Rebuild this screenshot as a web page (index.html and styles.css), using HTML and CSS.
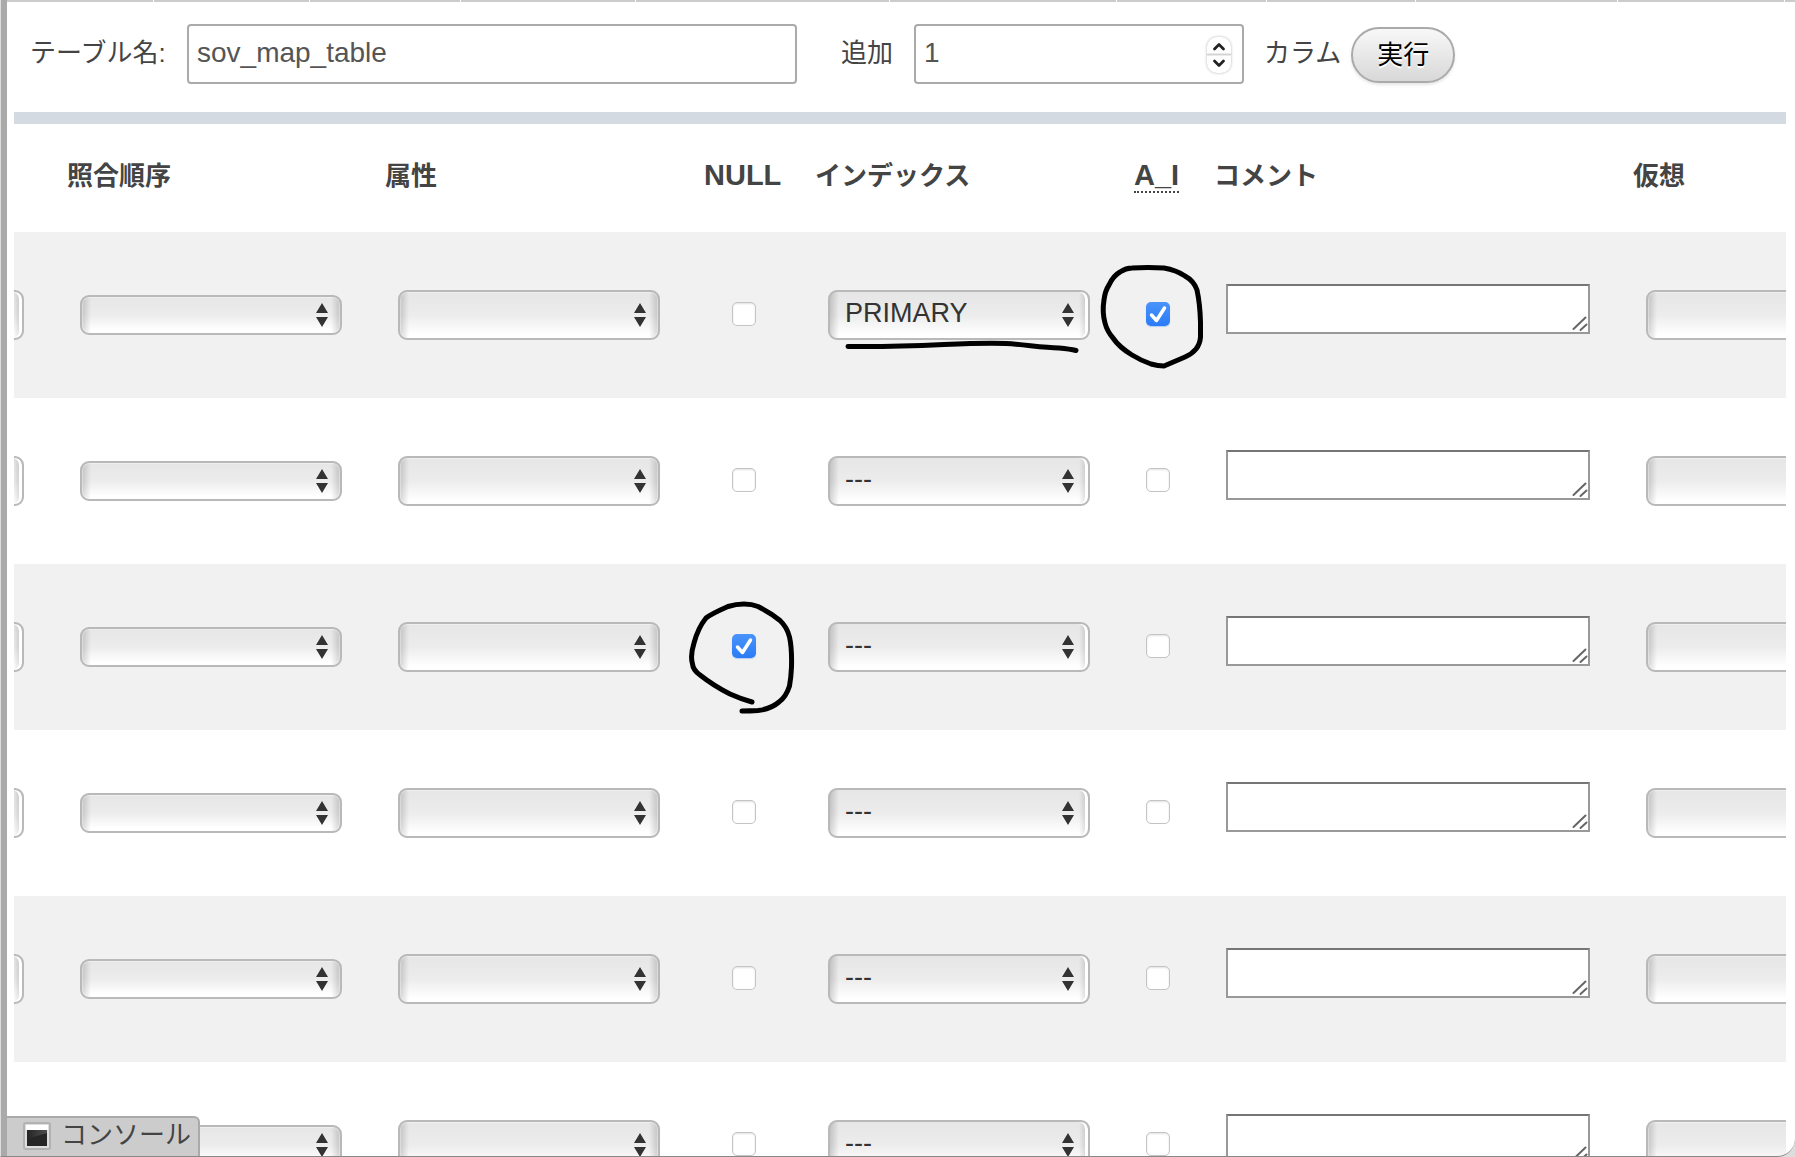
FILE: index.html
```html
<!DOCTYPE html>
<html lang="ja">
<head>
<meta charset="utf-8">
<title>sov_map_table</title>
<link rel="stylesheet" href="styles.css">
</head>
<body>
<main class="page">
  <div class="tab-edge"><i></i><i></i><i></i><i></i><i></i><i></i><i></i><i></i><i></i><i></i></div>
  <form class="toolbar">
    <label class="name-label" for="table-name">テーブル名:</label>
    <input class="field name-field" id="table-name" type="text" value="sov_map_table">
    <label class="add-label" for="add-count">追加</label>
    <div class="number">
      <input class="field" id="add-count" type="number" value="1">
      <svg class="spinner" viewBox="0 0 24 36" aria-hidden="true"><path d="M0 17.500h24" stroke="#d4d4d4" stroke-width="2"/><path d="M7.500 12 12 7.500l4.500 4.500M7.500 24l4.500 4.500 4.500-4.500" fill="none" stroke="#222" stroke-width="2.800" stroke-linecap="round" stroke-linejoin="round"/></svg>
    </div>
    <span class="unit">カラム</span>
    <button class="go" type="button">実行</button>
  </form>

  <div class="table-wrap">
  <table class="columns">
    <colgroup><col class="c-type"><col class="c-wide"><col class="c-wide"><col class="c-null"><col class="c-wide"><col class="c-ai"><col class="c-comment"><col></colgroup>
    <thead>
      <tr><th></th><th>照合順序</th><th>属性</th><th class="latin">NULL</th><th>インデックス</th><th class="latin"><abbr title="AUTO_INCREMENT">A_I</abbr></th><th>コメント</th><th>仮想</th></tr>
    </thead>
    <tbody>
      <tr>
        <td class="clip-left"><div><select class="deep" aria-label="データ型"><option></option></select></div></td>
        <td><select class="short" aria-label="照合順序"><option></option></select></td>
        <td><select aria-label="属性"><option></option></select></td>
        <td class="tick"><input type="checkbox" aria-label="NULL"></td>
        <td><select class="deep" aria-label="インデックス"><option>PRIMARY</option></select></td>
        <td class="tick"><input type="checkbox" aria-label="A_I" checked></td>
        <td><textarea aria-label="コメント"></textarea></td>
        <td class="clip"><select aria-label="仮想"><option></option></select></td>
      </tr>
      <tr>
        <td class="clip-left"><div><select class="deep" aria-label="データ型"><option></option></select></div></td>
        <td><select class="short" aria-label="照合順序"><option></option></select></td>
        <td><select aria-label="属性"><option></option></select></td>
        <td class="tick"><input type="checkbox" aria-label="NULL"></td>
        <td><select class="deep" aria-label="インデックス"><option>---</option></select></td>
        <td class="tick"><input type="checkbox" aria-label="A_I"></td>
        <td><textarea aria-label="コメント"></textarea></td>
        <td class="clip"><select aria-label="仮想"><option></option></select></td>
      </tr>
      <tr>
        <td class="clip-left"><div><select class="deep" aria-label="データ型"><option></option></select></div></td>
        <td><select class="short" aria-label="照合順序"><option></option></select></td>
        <td><select aria-label="属性"><option></option></select></td>
        <td class="tick"><input type="checkbox" aria-label="NULL" checked></td>
        <td><select class="deep" aria-label="インデックス"><option>---</option></select></td>
        <td class="tick"><input type="checkbox" aria-label="A_I"></td>
        <td><textarea aria-label="コメント"></textarea></td>
        <td class="clip"><select aria-label="仮想"><option></option></select></td>
      </tr>
      <tr>
        <td class="clip-left"><div><select class="deep" aria-label="データ型"><option></option></select></div></td>
        <td><select class="short" aria-label="照合順序"><option></option></select></td>
        <td><select aria-label="属性"><option></option></select></td>
        <td class="tick"><input type="checkbox" aria-label="NULL"></td>
        <td><select class="deep" aria-label="インデックス"><option>---</option></select></td>
        <td class="tick"><input type="checkbox" aria-label="A_I"></td>
        <td><textarea aria-label="コメント"></textarea></td>
        <td class="clip"><select aria-label="仮想"><option></option></select></td>
      </tr>
      <tr>
        <td class="clip-left"><div><select class="deep" aria-label="データ型"><option></option></select></div></td>
        <td><select class="short" aria-label="照合順序"><option></option></select></td>
        <td><select aria-label="属性"><option></option></select></td>
        <td class="tick"><input type="checkbox" aria-label="NULL"></td>
        <td><select class="deep" aria-label="インデックス"><option>---</option></select></td>
        <td class="tick"><input type="checkbox" aria-label="A_I"></td>
        <td><textarea aria-label="コメント"></textarea></td>
        <td class="clip"><select aria-label="仮想"><option></option></select></td>
      </tr>
      <tr>
        <td class="clip-left"><div><select class="deep" aria-label="データ型"><option></option></select></div></td>
        <td><select class="short" aria-label="照合順序"><option></option></select></td>
        <td><select aria-label="属性"><option></option></select></td>
        <td class="tick"><input type="checkbox" aria-label="NULL"></td>
        <td><select class="deep" aria-label="インデックス"><option>---</option></select></td>
        <td class="tick"><input type="checkbox" aria-label="A_I"></td>
        <td><textarea aria-label="コメント"></textarea></td>
        <td class="clip"><select aria-label="仮想"><option></option></select></td>
      </tr>
    </tbody>
  </table>
  </div>

  <!-- Hand-drawn marks over the form -->
  <svg class="marks" width="1" height="1" aria-hidden="true">
    <g fill="none" stroke="#000" stroke-width="5" stroke-linecap="round" stroke-linejoin="round">
      <path d="M848 346.500C880 347 912 346 944 344.500C968 343.500 990 343 1006 343.500C1024 344.500 1042 347.500 1059 348Q1070 349 1076 350.500"/>
      <path d="M1132 268Q1148 267 1164 268Q1176 270 1185 276Q1194 281 1197 290Q1200 304 1200.500 322V337Q1200 344 1196 349Q1192 354 1185 357L1164 366Q1158 366 1151 364Q1140 360 1132 355Q1119 347 1113 338Q1107 331 1105 323Q1102 312 1104 300Q1105 291 1109 285Q1113 276 1120 272Q1126 268 1132 268Z"/>
      <path d="M752 702Q741 699 730 694Q714 686 700 675Q693 670 692.500 664Q690 656 694 643Q698 628 706 618Q711 614 728 606.500Q736 604 744 604Q752 604 758 606.500Q771 613 780 620.500Q787 627 789.500 637Q792 648 791.500 667Q791 678 789.500 686Q786 697 779 702Q771 709 758 710.500Q750 711 742 711"/>
    </g>
  </svg>
</main>

<button class="console" type="button">
  <svg class="console-icon" viewBox="0 0 28 28" aria-hidden="true">
    <defs><linearGradient id="shine" x1="0" y1="0" x2="1" y2="0"><stop offset="0" stop-color="#222"/><stop offset="1" stop-color="#777"/></linearGradient></defs>
    <rect x="1" y="1" width="26" height="26" rx="2" fill="#dedede" stroke="#b2b2b2" stroke-width="2"/>
    <path d="M3 3h22v5H3z" fill="#fff"/>
    <path d="M4 8h20v16H4z" fill="#262626"/>
    <path d="M4 8h20v3L4 17z" fill="url(#shine)" opacity=".5"/>
  </svg>
  コンソール
</button>
<div class="window-edge"></div>
</body>
</html>
```

FILE: styles.css
```css
* { box-sizing: border-box; }

body {
  margin: 0;
  height: 100vh;
  overflow: hidden;
  background: #fff;
  color: #444;
  font-family: "Liberation Sans", "Noto Sans CJK JP", sans-serif;
  font-size: 26px;
}

.page {
  height: 100vh;
  overflow: hidden;
  border-left: 7px solid #aaa;
}

.tab-edge {
  display: grid;
  grid-template-columns: 147fr 156fr 151fr 175fr 254fr 227fr 150fr 149fr 202fr 167fr 10px;
  height: 2px;
  background: #ccc;
}

.tab-edge i { border-right: 1px solid #fff; }

.toolbar {
  display: flex;
  align-items: center;
  padding: 22px 24px 28px 23px;
}

.toolbar label,
.unit {
  flex: none;
  padding-bottom: 2px;
  line-height: 40px;
}

.name-label { width: 157px; }

.field {
  width: 100%;
  height: 60px;
  padding: 0 8px 2px;
  border: 2px solid #aaa;
  border-radius: 4px;
  background: #fff;
  color: #555;
  font-family: "Liberation Sans", sans-serif;
  font-size: 28px;
  appearance: textfield;
}

.field::-webkit-inner-spin-button { display: none; }

.name-field { width: 610px; }

.add-label { margin: 0 21px 0 44px; }

.number {
  position: relative;
  width: 330px;
  margin-right: 20px;
}

.number .field { display: block; }

.spinner {
  position: absolute;
  top: 13px;
  right: 13px;
  width: 24px;
  height: 36px;
  border-radius: 10px;
  background: #fff;
  box-shadow: 0 0 3px rgba(0, 0, 0, .3);
}

.go {
  width: 104px;
  height: 56px;
  margin: 2px 0 0 10px;
  padding: 0 0 6px;
  border: 2px solid #aaa;
  border-radius: 28px;
  background: linear-gradient(#f8f8f8, #d8d8d8);
  box-shadow: 0 2px 3px rgba(0, 0, 0, .1);
  color: #000;
  font: inherit;
  text-shadow: 0 2px 0 #fff;
}

.table-wrap {
  margin: 0 9px 0 7px;
  border-top: 12px solid #d3dae2;
}

.columns {
  width: 100%;
  border-collapse: collapse;
  table-layout: fixed;
}

.c-type { width: 42px; }
.c-wide { width: 318px; }
.c-null { width: 112px; }
.c-ai { width: 81px; }
.c-comment { width: 419px; }

th {
  height: 108px;
  padding: 0 0 10px 11px;
  text-align: left;
  font-weight: bold;
  white-space: nowrap;
}

th.latin {
  padding: 0 0 6px 12px;
  font-size: 29px;
}

abbr {
  border-bottom: 2px dotted #444;
  line-height: 26px;
  text-decoration: none;
}

td {
  height: 166px;
  padding: 0 0 0 24px;
  vertical-align: middle;
}

tbody tr:nth-child(odd) { background: #f1f1f1; }

.clip { overflow: hidden; }

.clip-left {
  overflow: hidden;
  padding: 0 32px 0 0;
}

.clip-left div {
  display: flex;
  justify-content: flex-end;
}

select {
  display: block;
  flex: none;
  width: 262px;
  height: 50px;
  padding: 0 40px 4px 15px;
  border: 2px solid #b9b9b9;
  border-radius: 9px;
  appearance: none;
  background:
    url("data:image/svg+xml,%3Csvg xmlns='http://www.w3.org/2000/svg' viewBox='0 0 12 24'%3E%3Cpath d='M6 0l6 10H0zM0 14h12L6 24z' fill='%23333'/%3E%3C/svg%3E") right 12px center / 12px 24px no-repeat,
    linear-gradient(90deg, rgba(0, 0, 0, .16), transparent 9px calc(100% - 9px), rgba(0, 0, 0, .16)),
    linear-gradient(#e6e6e6, #ececec 50%, #fff 92%);
  box-shadow: inset 0 0 1px 1px rgba(255, 255, 255, .4);
  color: #333;
  font-family: "Liberation Sans", sans-serif;
  font-size: 27px;
}

.short { height: 40px; }

.deep {
  background-position: right 14px center, 0 0, 0 0;
  box-shadow: inset -3px 0 0 #fff;
}

.tick { padding: 0; }

input[type="checkbox"] {
  display: block;
  width: 24px;
  height: 24px;
  margin: 0 0 2px 40px;
  border: 1px solid #c4c4c4;
  border-radius: 5px;
  appearance: none;
  background: #fff;
  box-shadow: inset 0 1px 2px rgba(0, 0, 0, .12);
}

.tick:nth-child(6) input { margin-left: 24px; }

input[type="checkbox"]:checked {
  border: 0;
  background:
    url("data:image/svg+xml,%3Csvg xmlns='http://www.w3.org/2000/svg' viewBox='0 0 24 24'%3E%3Cpath d='M5.500 13l5 5.500L18.500 6' fill='none' stroke='white' stroke-width='3.500' stroke-linecap='round' stroke-linejoin='round'/%3E%3C/svg%3E"),
    linear-gradient(#4a94fa, #2a7bf6);
  box-shadow: 0 1px 1px rgba(40, 120, 246, .3);
}

textarea {
  display: block;
  width: 364px;
  height: 50px;
  margin: 0 0 12px -1px;
  border: 2px solid #999;
  border-top-color: #767676;
  resize: none;
  background:
    url("data:image/svg+xml,%3Csvg xmlns='http://www.w3.org/2000/svg' viewBox='0 0 16 16'%3E%3Cpath d='M1.500 13l12-11.500M8.500 14l6-5.500' stroke='%23666' stroke-width='2' stroke-linecap='round'/%3E%3C/svg%3E") right bottom / 16px 16px no-repeat #fff;
}

.marks {
  position: absolute;
  top: 0;
  left: 0;
  overflow: visible;
  pointer-events: none;
}

.console {
  position: fixed;
  bottom: 1px;
  left: 7px;
  display: flex;
  gap: 10px;
  width: 193px;
  height: 40px;
  padding: 4px 0 0 16px;
  border: solid #aaa;
  border-width: 2px 2px 0 0;
  border-radius: 0 6px 0 0;
  background: #ccc;
  color: #444;
  font: inherit;
  line-height: 26px;
  white-space: nowrap;
}

.console-icon {
  flex: none;
  width: 28px;
  height: 28px;
}

.window-edge {
  position: fixed;
  inset: 0;
  border-bottom: 1px solid #888;
  border-left: 1px solid #ddd;
  border-bottom-right-radius: 18px;
  box-shadow: 0 0 0 18px #ddd;
  pointer-events: none;
}
```
